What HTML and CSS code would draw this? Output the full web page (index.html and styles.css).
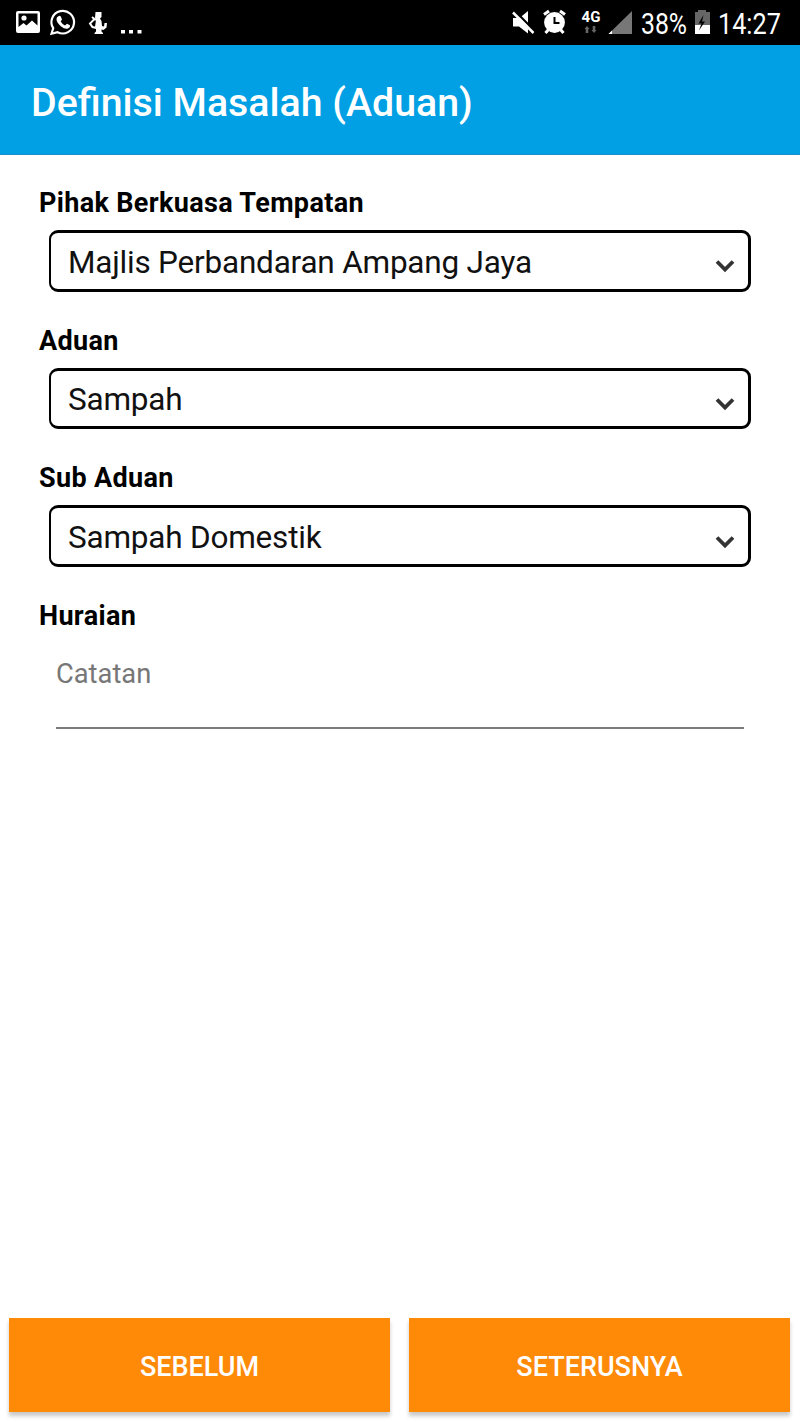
FILE: index.html
```html
<!DOCTYPE html>
<html lang="ms">
<head>
<meta charset="utf-8">
<title>Definisi Masalah (Aduan)</title>
<link rel="stylesheet" href="styles.css">
</head>
<body>
<div class="screen">
  <div class="status">
    <svg class="status-icons" width="150" height="45" viewBox="0 0 150 45">
      <path fill="#fff" fill-rule="evenodd" d="M18 11h20q2 0 2 2v18q0 2-2 2H18q-2 0-2-2V13q0-2 2-2zm.5 2.500V27l5-4 3 2.500 5.500-5 5.500 5V13.500z"/>
      <circle cx="24" cy="18" r="2.600" fill="#fff"/>
      <path fill="none" stroke="#fff" stroke-width="2.200" d="M51.500 33.800l1.700-5.600a11.300 11.300 0 1 1 4.400 4z"/>
      <path fill="#fff" d="M58 16.500q2-1.800 3 .5l1 2.500-1.300 2q1.600 2.800 4.300 4l2-1.800 3 1.600q.5 2.200-2 3.200-3 1-7.200-2.300-4.400-3.900-4.300-7.200 0-1.600 1.500-2.500z"/>
      <path fill="#fff" d="M95.500 12h6v5l-1.500 1.500 1.500 2.500.5 5 2 .5.500-3.500h2.500l-.5 4.500-3 2.500-2-.5v2l1.500 1.500v1h-8.500v-1l1.500-1.500V28l-1-1 1-7-1-2z"/>
      <path fill="none" stroke="#fff" stroke-width="2" d="M98 19.500l-4 0-4 4 2.500 3.500 4 1M92 17l2.500 2"/>
      <path fill="#fff" d="M121 30h4v3.500h-4zM129 30h4v3.500h-4zM137.500 30h4v3.500h-4z"/>
    </svg>
    <div class="status-right">
      <svg width="62" height="45" viewBox="512 0 62 45">
        <path fill="#fff" d="M514 18h6.500l8.500-7v22.500l-9-7H514z"/>
        <path stroke="#000" stroke-width="2.500" d="M515.500 10.500l20 20.500"/>
        <path stroke="#fff" stroke-width="2.500" d="M514 12.500l20.500 20.500"/>
        <path stroke="#fff" stroke-width="3" d="M545 14.500l5-3.500M566 14.500l-5-3.500M550 29l-3.500 4M561 29l3.500 4"/>
        <circle cx="555.500" cy="22.500" r="10.400" fill="#fff"/>
        <path fill="none" stroke="#000" stroke-width="2" d="M555.500 17v6h5"/>
      </svg>
      <div class="network"><span>4G</span>
        <svg width="14" height="8" viewBox="0 0 14 8"><path fill="#666" d="M3 0l2.500 3H4.300v4H1.700V3H.5zM8.700 0h2.600v4h1.200L10 7 7.500 4h1.200z"/></svg>
      </div>
      <svg class="signal" width="25" height="45" viewBox="609 0 25 45"><path fill="#777" d="M609.500 34L633 11v23z"/><path fill="#fff" d="M609.500 34l3.500-3.500V34z"/></svg>
      <span class="percent">38%</span>
      <svg class="battery" width="16" height="45" viewBox="694 0 16 45"><path fill="#666" d="M695 12h3v-2h8v2h4v13h-15z"/><path fill="#fff" d="M695 25h15v9h-15z"/><path fill="#000" d="M703.500 15l-5 8.500h3l-2.500 7 6-9h-3z"/></svg>
      <span class="time">14:27</span>
    </div>
  </div>
  <header class="appbar"><h1>Definisi Masalah (Aduan)</h1></header>
  <main class="form">
    <section class="field">
      <div class="label">Pihak Berkuasa Tempatan</div>
      <div class="select"><span>Majlis Perbandaran Ampang Jaya</span><svg class="chevron" width="20" height="14" viewBox="0 0 20 14"><path d="M2 2.500l8 8 8-8"/></svg></div>
    </section>
    <section class="field">
      <div class="label">Aduan</div>
      <div class="select"><span>Sampah</span><svg class="chevron" width="20" height="14" viewBox="0 0 20 14"><path d="M2 2.500l8 8 8-8"/></svg></div>
    </section>
    <section class="field">
      <div class="label">Sub Aduan</div>
      <div class="select"><span>Sampah Domestik</span><svg class="chevron" width="20" height="14" viewBox="0 0 20 14"><path d="M2 2.500l8 8 8-8"/></svg></div>
    </section>
    <section class="field">
      <div class="label">Huraian</div>
      <div class="note"><span>Catatan</span></div>
    </section>
  </main>
  <footer class="actions">
    <button class="action"><span>SEBELUM</span></button>
    <button class="action"><span>SETERUSNYA</span></button>
  </footer>
</div>
</body>
</html>
```
FILE: styles.css
```css
* { box-sizing: border-box; }
body { margin: 0; background: #fff; font-family: Roboto, sans-serif; color: #111; }
.screen { width: 800px; height: 1422px; display: flex; flex-direction: column; }
.status { height: 45px; background: #000; color: #fff; display: flex; justify-content: space-between; flex: none; }
.status-right { display: flex; align-items: center; padding-right: 19px; }
.network { width: 24px; margin-left: 6px; display: flex; flex-direction: column; align-items: center; font-size: 15px; line-height: 14px; font-weight: 700; padding-bottom: 1px; }
.network svg { margin-top: 2px; }
.signal { margin-left: 5px; }
.percent, .time { font-size: 29px; line-height: 45px; padding-top: 3px; white-space: nowrap; transform: scaleX(.87); transform-origin: 0 50%; }
.percent { width: 46px; margin-left: 8px; transform: scaleX(.855); }
.battery { margin-left: 7px; }
.time { margin-left: 8px; width: 63px; }
.appbar { height: 110px; background: #019fe3; border-bottom: 1px solid #1b8fc5; padding: 0 31px; display: flex; align-items: center; flex: none; }
h1 { margin: 0; padding-top: 7px; color: #fff; font-size: 39.300px; font-weight: 500; line-height: 48px; white-space: nowrap; }
.form { flex: 1; padding: 30px 49px 0; }
.field { height: 137.700px; }
.label { height: 45px; margin-left: -10px; font-size: 27px; font-weight: 700; line-height: 36px; letter-spacing: .34px; color: #000; }
.select { height: 61.500px; border: 3px solid #000; border-left-width: 2px; border-radius: 9px; padding: 0 13px 0 17px; display: flex; align-items: center; justify-content: space-between; font-size: 31.500px; letter-spacing: -.21px; white-space: nowrap; }
.select span { padding-top: 3px; }
.chevron { margin-top: 11px; }
.chevron path { fill: none; stroke: #333; stroke-width: 3.800; }
.note { height: 101px; margin: -15px 7px 0; padding-top: 26px; border-bottom: 2px solid #7b7b7b; color: #777; font-size: 27.300px; line-height: 40px; }
.actions { display: grid; grid-template-columns: 381px 381px; column-gap: 19px; padding: 0 9px 10px; flex: none; }
.action { height: 94px; border: 0; background: #ff8a08; color: #fff; font: 500 27px/40px Roboto, sans-serif; padding: 3px 0 0; box-shadow: 0 4px 4px rgba(0,0,0,.22); }
```
